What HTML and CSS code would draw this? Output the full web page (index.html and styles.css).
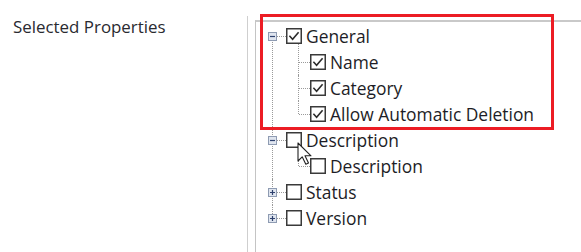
FILE: index.html
```html
<!DOCTYPE html>
<html lang="en">
<head>
    <meta charset="UTF-8">
    <title>Selected Properties</title>
    <link rel="stylesheet" href="styles.css">
</head>
<body>
    <div class="page">
        <div class="field-label">Selected Properties</div>

        <div class="panel">
            <div class="tree-box">
                <ul class="tree">
                    <li>
                        <div class="row">
                            <svg class="expander" width="9" height="9" viewBox="0 0 9 9"><rect x="0.5" y="0.5" width="8" height="8" fill="#dfe5ef" stroke="#8e9bb2"/><path d="M2 4.5h5" stroke="#2e416e" stroke-width="1.2"/></svg>
                            <span class="hdots"></span>
                            <svg class="check" width="16" height="16" viewBox="0 0 16 16"><rect x="0.75" y="0.75" width="14.5" height="14.5" fill="#fff" stroke="#3a3a3a" stroke-width="1.5"/><path d="M3.4 7.8l3.2 3.4 6-7" fill="none" stroke="#2b2b2b" stroke-width="1.6"/></svg>
                            <span class="text">General</span>
                        </div>
                        <ul class="children">
                            <li class="row">
                                <span class="cdots"></span>
                                <svg class="check" width="16" height="16" viewBox="0 0 16 16"><rect x="0.75" y="0.75" width="14.5" height="14.5" fill="#fff" stroke="#3a3a3a" stroke-width="1.5"/><path d="M3.4 7.8l3.2 3.4 6-7" fill="none" stroke="#2b2b2b" stroke-width="1.6"/></svg>
                                <span class="text">Name</span>
                            </li>
                            <li class="row">
                                <span class="cdots"></span>
                                <svg class="check" width="16" height="16" viewBox="0 0 16 16"><rect x="0.75" y="0.75" width="14.5" height="14.5" fill="#fff" stroke="#3a3a3a" stroke-width="1.5"/><path d="M3.4 7.8l3.2 3.4 6-7" fill="none" stroke="#2b2b2b" stroke-width="1.6"/></svg>
                                <span class="text">Category</span>
                            </li>
                            <li class="row">
                                <span class="cdots"></span>
                                <svg class="check" width="16" height="16" viewBox="0 0 16 16"><rect x="0.75" y="0.75" width="14.5" height="14.5" fill="#fff" stroke="#3a3a3a" stroke-width="1.5"/><path d="M3.4 7.8l3.2 3.4 6-7" fill="none" stroke="#2b2b2b" stroke-width="1.6"/></svg>
                                <span class="text">Allow Automatic Deletion</span>
                            </li>
                        </ul>
                    </li>
                    <li>
                        <div class="row">
                            <svg class="expander" width="9" height="9" viewBox="0 0 9 9"><rect x="0.5" y="0.5" width="8" height="8" fill="#dfe5ef" stroke="#8e9bb2"/><path d="M2 4.5h5" stroke="#2e416e" stroke-width="1.2"/></svg>
                            <span class="hdots"></span>
                            <svg class="check" width="16" height="16" viewBox="0 0 16 16"><rect x="0.75" y="0.75" width="14.5" height="14.5" fill="#fff" stroke="#3a3a3a" stroke-width="1.5"/></svg>
                            <span class="text">Description</span>
                        </div>
                        <ul class="children">
                            <li class="row">
                                <span class="cdots"></span>
                                <svg class="check" width="16" height="16" viewBox="0 0 16 16"><rect x="0.75" y="0.75" width="14.5" height="14.5" fill="#fff" stroke="#3a3a3a" stroke-width="1.5"/></svg>
                                <span class="text">Description</span>
                            </li>
                        </ul>
                    </li>
                    <li>
                        <div class="row">
                            <svg class="expander" width="9" height="9" viewBox="0 0 9 9"><rect x="0.5" y="0.5" width="8" height="8" fill="#dfe5ef" stroke="#8e9bb2"/><path d="M2 4.5h5M4.5 2v5" stroke="#2e416e" stroke-width="1.2"/></svg>
                            <span class="hdots"></span>
                            <svg class="check" width="16" height="16" viewBox="0 0 16 16"><rect x="0.75" y="0.75" width="14.5" height="14.5" fill="#fff" stroke="#3a3a3a" stroke-width="1.5"/></svg>
                            <span class="text">Status</span>
                        </div>
                    </li>
                    <li>
                        <div class="row">
                            <svg class="expander" width="9" height="9" viewBox="0 0 9 9"><rect x="0.5" y="0.5" width="8" height="8" fill="#dfe5ef" stroke="#8e9bb2"/><path d="M2 4.5h5M4.5 2v5" stroke="#2e416e" stroke-width="1.2"/></svg>
                            <span class="hdots"></span>
                            <svg class="check" width="16" height="16" viewBox="0 0 16 16"><rect x="0.75" y="0.75" width="14.5" height="14.5" fill="#fff" stroke="#3a3a3a" stroke-width="1.5"/></svg>
                            <span class="text">Version</span>
                        </div>
                    </li>
                </ul>
            </div>
        </div>

        <!-- annotation box drawn over the tree -->
        <div class="highlight"></div>

        <!-- mouse pointer -->
        <svg class="cursor" width="16" height="24" viewBox="0 0 16 24">
            <path d="M1 1v18l4.2-4.2 3.6 7.4 2.7-1.3-3.5-7.1h6z" fill="#fff" stroke="#222" stroke-width="1.1" stroke-linejoin="round"/>
        </svg>
    </div>
</body>
</html>
```

FILE: styles.css
```css
* {
    margin: 0;
    padding: 0;
    box-sizing: border-box;
}

body {
    background: #ffffff;
    font-family: 'Open Sans', 'Noto Sans', sans-serif;
    color: #1d1d26;
    width: 581px;
    height: 252px;
    overflow: hidden;
}

.page {
    position: relative;
    display: flex;
    height: 252px;
    padding-top: 16px;
}

.field-label {
    width: 247px;
    padding: 1px 0 0 13px;
    font-size: 16.9px;
    line-height: 20px;
    color: #2a2a30;
}

.panel {
    flex: 1;
    border-left: 1px solid #cfcfcf;
    padding-left: 7px;
    padding-top: 4px;
}

.tree-box {
    height: 100%;
    border-left: 1px solid #c4c4c4;
    border-top: 2px solid #c9c9c9;
    padding: 1px 0 0 12px;
}

.tree,
.children {
    list-style: none;
}

.tree > li {
    position: relative;
}

/* vertical dotted line joining the top level expanders */
.tree > li::before {
    content: '';
    position: absolute;
    left: 4px;
    top: 0;
    bottom: 0;
    border-left: 1px dotted #9a9a9a;
}

.tree > li:first-child::before {
    top: 13px;
}

.tree > li:last-child::before {
    bottom: auto;
    height: 13px;
}

.row {
    display: flex;
    align-items: center;
    height: 26px;
}

.expander {
    position: relative;
    z-index: 1;
    flex-shrink: 0;
}

.hdots {
    width: 9px;
    border-top: 1px dotted #9a9a9a;
}

.check {
    flex-shrink: 0;
}

.text {
    margin-left: 4px;
    font-size: 17.4px;
    line-height: 22px;
    white-space: nowrap;
}

.children {
    padding-left: 30px;
}

.children > li {
    position: relative;
}

.children > li::before {
    content: '';
    position: absolute;
    left: 0;
    top: 0;
    bottom: 0;
    border-left: 1px dotted #9a9a9a;
}

.children > li:first-child::before {
    top: -5px;
}

.children > li:last-child::before {
    bottom: auto;
    height: 13px;
}

.children > li:first-child:last-child::before {
    height: 18px;
}

.cdots {
    width: 11px;
    margin-left: 1px;
    border-top: 1px dotted #9a9a9a;
}

.highlight {
    position: absolute;
    left: 260px;
    top: 14px;
    width: 294px;
    height: 116px;
    border: 3px solid #ec1c24;
}

.cursor {
    position: absolute;
    left: 297px;
    top: 142px;
}
```
